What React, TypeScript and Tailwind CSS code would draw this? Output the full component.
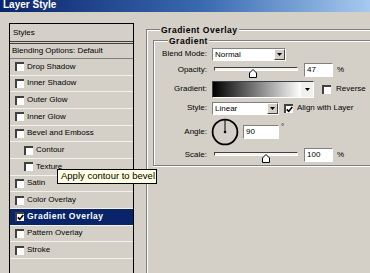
import React from 'react'

const items = [
    { label: 'Drop Shadow' },
    { label: 'Inner Shadow' },
    { label: 'Outer Glow' },
    { label: 'Inner Glow' },
    { label: 'Bevel and Emboss' },
    { label: 'Contour', sub: true },
    { label: 'Texture', sub: true },
    { label: 'Satin' },
    { label: 'Color Overlay' },
    { label: 'Gradient Overlay', checked: true, selected: true },
    { label: 'Pattern Overlay' },
    { label: 'Stroke' },
]

function CheckBox({ checked }: { checked?: boolean }) {
    return (
        <span className="flex h-[9px] w-[9px] shrink-0 items-center justify-center border-l-2 border-t-2 border-[#404040] bg-white">
            {checked && (
                <svg viewBox="0 0 7 7" className="h-[7px] w-[7px]">
                    <path d="M0.8 3.4 L2.7 5.4 L6.3 0.9" stroke="#000" strokeWidth="1.6" fill="none" />
                </svg>
            )}
        </span>
    )
}

function DropArrow() {
    return (
        <span className="flex h-full w-[11px] shrink-0 items-center justify-center border-l border-t border-l-white border-t-white border-r border-b border-r-[#404040] border-b-[#404040] bg-[#d4d0c8]">
            <svg viewBox="0 0 5 3" className="h-[3px] w-[5px]">
                <path d="M0 0 H5 L2.5 3 Z" fill="#000" />
            </svg>
        </span>
    )
}

function Select({ value, width }: { value: string; width: string }) {
    return (
        <div className={`flex h-[13px] items-stretch border border-t-[#808080] border-l-[#808080] border-b-white border-r-white bg-white ${width}`}>
            <span className="flex-1 pl-[2px] leading-[11px]">{value}</span>
            <DropArrow />
        </div>
    )
}

function Slider({ pos }: { pos: number }) {
    return (
        <div className="relative flex h-full w-[84px] items-center">
            <div className="h-[4px] w-full border border-[#404040] border-b-white border-r-white bg-[#f4f4f0] -mt-[2px]" />
            <svg
                viewBox="0 0 8 9"
                className="absolute top-1/2 h-[9px] w-[8px] -translate-y-[1px]"
                style={{ left: pos }}
            >
                <path d="M0.5 8.5 V4 L4 0.5 L7.5 4 V8.5 Z" fill="#fff" stroke="#000" strokeWidth="1" />
            </svg>
        </div>
    )
}

function NumField({ value, width }: { value: string; width: string }) {
    return (
        <div className={`h-[14px] border border-t-[#808080] border-l-[#808080] border-b-white border-r-white bg-white pl-[2px] leading-[12px] ${width}`}>
            {value}
        </div>
    )
}

function Row({ label, className, children }: { label: string; className: string; children: React.ReactNode }) {
    return (
        <div className={`flex items-center ${className}`}>
            <span className="w-[53px] shrink-0 text-right">{label}</span>
            {children}
        </div>
    )
}

export default function App() {
    return (
        <div className="relative flex h-[273px] w-[370px] flex-col overflow-hidden bg-[#d4d0c8] font-['Liberation_Sans',Arial,sans-serif] text-[8px] text-black">
            {/* title bar */}
            <div className="h-[12px] shrink-0 bg-[linear-gradient(to_right,#0a246a,#3a6ab0_55%,#a6caf0)] pl-[3px]">
                <div className="text-[10px] font-bold leading-[10px] text-white">Layer Style</div>
            </div>

            <div className="flex min-h-0 flex-1">
                {/* styles list */}
                <div className="ml-[9px] mt-[11px] flex w-[125px] shrink-0 flex-col border border-b-0 border-black">
                    <div className="flex h-[17px] items-center pl-[3px]">Styles</div>
                    <div className="h-[3px] border-y border-[#404040]" />
                    <div className="flex h-[15px] items-center border-b border-[#808080] pl-[2px]">Blending Options: Default</div>
                    {items.map((it) => (
                        <div
                            key={it.label}
                            className={`flex h-[16.67px] shrink-0 items-center gap-[3px] border-b border-[#f2f1ec] ${it.sub ? 'pl-[14px]' : 'pl-[5px]'} ${it.selected ? 'bg-[#0a246a] font-bold tracking-[0.5px] text-white text-[8.5px]' : ''}`}
                        >
                            <CheckBox checked={it.checked} />
                            <span>{it.label}</span>
                        </div>
                    ))}
                </div>

                {/* settings */}
                <div className="ml-[12px] mt-[17px] flex w-[240px] shrink-0 flex-col border-l border-t border-[#808080] shadow-[inset_1px_1px_0_#fff]">
                    <div className="-mt-[5px] ml-[13px] self-start bg-[#d4d0c8] px-[1px] text-[8.5px] font-bold leading-[11px] tracking-[0.5px]">
                        Gradient Overlay
                    </div>
                    <div className="ml-[6px] mt-[4px] flex w-[228px] flex-col border border-r-0 border-[#808080] pb-[3px] shadow-[inset_1px_1px_0_#fff,0_1px_0_#fff]">
                        <div className="-mt-[5px] ml-[14px] self-start bg-[#d4d0c8] px-[1px] text-[8.5px] font-bold leading-[11px] tracking-[0.5px]">
                            Gradient
                        </div>
                        <Row label="Blend Mode:" className="h-[14px]">
                            <div className="ml-[5px]">
                                <Select value="Normal" width="w-[74px]" />
                            </div>
                        </Row>
                        <Row label="Opacity:" className="mt-[1px] h-[16px]">
                            <div className="ml-[7px] h-full">
                                <Slider pos={35} />
                            </div>
                            <div className="ml-[6px]">
                                <NumField value="47" width="w-[29px]" />
                            </div>
                            <span className="ml-[4px]">%</span>
                        </Row>
                        <Row label="Gradient:" className="mt-[2px] h-[18px]">
                            <div className="ml-[5px] flex h-[17px] w-[102px] items-stretch border border-t-[#404040] border-l-[#404040] border-b-white border-r-white">
                                <div className="flex-1 bg-[linear-gradient(to_right,#000,#fff)]" />
                                <span className="flex w-[12px] items-center justify-center bg-[#f0f0ec]">
                                    <svg viewBox="0 0 5 3" className="h-[3px] w-[5px]">
                                        <path d="M0 0 H5 L2.5 3 Z" fill="#000" />
                                    </svg>
                                </span>
                            </div>
                            <div className="ml-[8px]">
                                <CheckBox />
                            </div>
                            <span className="ml-[5px]">Reverse</span>
                        </Row>
                        <Row label="Style:" className="mt-[3px] h-[14px]">
                            <div className="ml-[5px]">
                                <Select value="Linear" width="w-[67px]" />
                            </div>
                            <div className="ml-[5px]">
                                <CheckBox checked />
                            </div>
                            <span className="ml-[4px]">Align with Layer</span>
                        </Row>
                        <Row label="Angle:" className="mt-[3px] h-[28px]">
                            <svg viewBox="0 0 28 28" className="ml-[4px] h-[28px] w-[28px]">
                                <circle cx="14" cy="14" r="12.4" fill="none" stroke="#000" strokeWidth="1.8" />
                                <line x1="14" y1="14" x2="14" y2="2" stroke="#000" strokeWidth="1" />
                                <circle cx="14" cy="14" r="1.3" fill="#000" />
                            </svg>
                            <div className="ml-[4px]">
                                <NumField value="90" width="w-[36px]" />
                            </div>
                            <span className="ml-[2px] -mt-[10px]">°</span>
                        </Row>
                        <Row label="Scale:" className="mt-[2px] h-[14px]">
                            <div className="ml-[7px] h-full">
                                <Slider pos={48} />
                            </div>
                            <div className="ml-[6px]">
                                <NumField value="100" width="w-[29px]" />
                            </div>
                            <span className="ml-[4px]">%</span>
                        </Row>
                    </div>
                </div>
            </div>

            {/* tooltip */}
            <div className="absolute left-[57px] top-[169px] flex h-[15px] w-[100px] items-center border border-black bg-[#ffffe1] pl-[3px] text-[9.5px]">
                Apply contour to bevel
            </div>
        </div>
    )
}
